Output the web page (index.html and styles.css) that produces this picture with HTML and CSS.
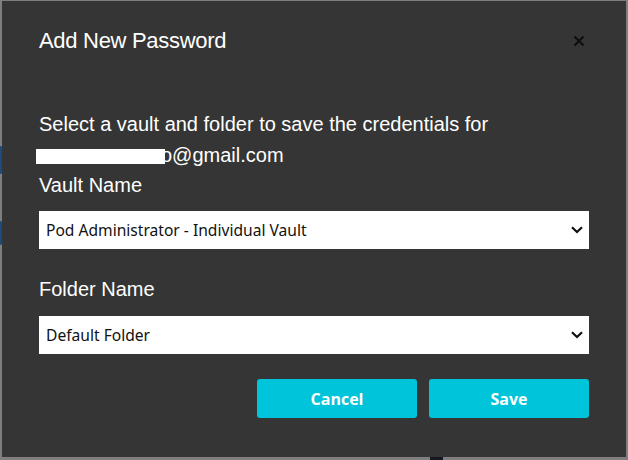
FILE: index.html
```html
<!DOCTYPE html>
<html lang="en">

<head>
  <meta charset="UTF-8">
  <meta name="viewport" content="width=device-width, initial-scale=1.0">
  <title>Add New Password</title>
  <link rel="stylesheet" href="styles.css">
</head>

<body>
  <!-- pieces of the page behind the overlay -->
  <div class="behind behind-a"></div>
  <div class="behind behind-b"></div>
  <div class="behind behind-c"></div>

  <div class="modal">
    <header class="modal-head">
      <h1>Add New Password</h1>
      <button class="close" aria-label="Close">
        <svg width="12" height="12" viewBox="0 0 12 12">
          <path d="M1.5 1.5 L10.5 10.5 M10.5 1.5 L1.5 10.5" stroke="#0d0d0d" stroke-width="2" fill="none" />
        </svg>
      </button>
    </header>

    <p class="intro">Select a vault and folder to save the credentials for
      <span class="redact"></span>o@gmail.com</p>

    <label class="field-label" for="vault">Vault Name</label>
    <div class="select-wrap">
      <select id="vault">
        <option>Pod Administrator - Individual Vault</option>
      </select>
      <svg class="chev" width="12" height="8" viewBox="0 0 12 8">
        <path d="M1 1.2 L6 6 L11 1.2" stroke="#111" stroke-width="2.2" fill="none" />
      </svg>
    </div>

    <label class="field-label second" for="folder">Folder Name</label>
    <div class="select-wrap">
      <select id="folder">
        <option>Default Folder</option>
      </select>
      <svg class="chev" width="12" height="8" viewBox="0 0 12 8">
        <path d="M1 1.2 L6 6 L11 1.2" stroke="#111" stroke-width="2.2" fill="none" />
      </svg>
    </div>

    <div class="actions">
      <button class="btn">Cancel</button>
      <button class="btn">Save</button>
    </div>
  </div>
</body>

</html>
```

FILE: styles.css
```css
body {
  margin: 0;
  background: #7f7f7f;
  font-family: "Liberation Sans", Arial, sans-serif;
  position: relative;
  height: 460px;
  overflow: hidden;
}

.behind {
  position: absolute;
  left: 0;
  width: 3px;
  background: #1d4b7c;
  border-radius: 0 3px 3px 0;
}

.behind-a {
  top: 146px;
  height: 28px;
}

.behind-b {
  top: 221px;
  height: 24px;
}

.behind-c {
  left: 430px;
  top: 456px;
  width: 13px;
  height: 4px;
  background: #15191f;
  border-radius: 0;
}

.modal {
  position: relative;
  margin: 1px 2px 0 2px;
  width: 587px;
  height: 456px;
  background: #353535;
  padding: 0 0 0 37px;
  box-sizing: content-box;
  color: #fff;
}

.modal-head {
  display: flex;
  justify-content: space-between;
  align-items: center;
  width: 550px;
  padding-top: 25px;
  height: 30px;
}

.modal-head h1 {
  margin: 0;
  font-size: 22px;
  font-weight: normal;
  letter-spacing: -0.3px;
  line-height: 30px;
}

.close {
  background: none;
  border: none;
  padding: 0;
  margin-right: 4px;
  display: flex;
}

.intro {
  margin: 53px 0 0 0;
  width: 550px;
  font-size: 20px;
  line-height: 31px;
}

.redact {
  display: inline-block;
  width: 129px;
  height: 15px;
  background: #fff;
  vertical-align: -2px;
  margin-left: -3px;
  margin-right: -4px;
  position: relative;
}

.field-label {
  display: block;
  font-size: 20px;
  line-height: 28px;
}

.field-label.second {
  margin-top: 26px;
}

.select-wrap {
  position: relative;
  width: 550px;
  margin-top: 12px;
}

.field-label.second + .select-wrap {
  margin-top: 13px;
}

.select-wrap select {
  appearance: none;
  -webkit-appearance: none;
  display: block;
  width: 100%;
  height: 38px;
  border: none;
  border-radius: 0;
  background: #fff;
  color: #111;
  padding: 0 0 0 7px;
  font: normal 15.6px "Noto Sans", "Open Sans", sans-serif;
}

.chev {
  position: absolute;
  right: 6px;
  top: 15px;
  pointer-events: none;
}

.actions {
  display: flex;
  justify-content: flex-end;
  gap: 12px;
  width: 550px;
  margin-top: 25px;
}

.btn {
  width: 160px;
  height: 39px;
  border: none;
  border-radius: 3px;
  background: #00c4da;
  color: #fff;
  font: bold 16px "Open Sans", sans-serif;
}
```
